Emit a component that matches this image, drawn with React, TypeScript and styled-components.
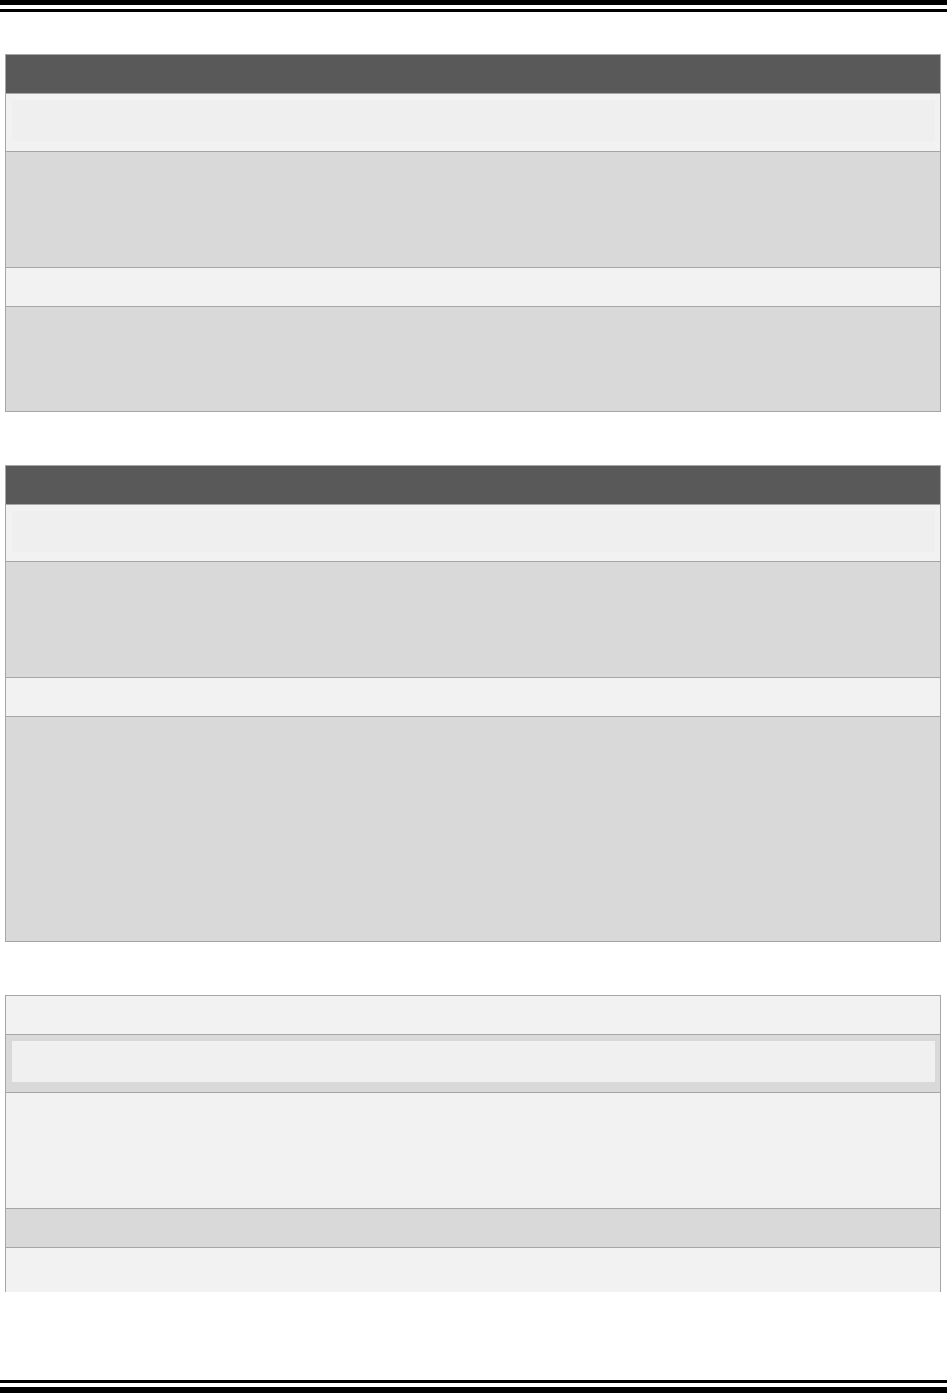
import React from "react";
import styled, { createGlobalStyle } from "styled-components";

const GlobalStyle = createGlobalStyle`
  html, body { margin: 0; padding: 0; background: #ffffff; }
  body { font-family: "Liberation Sans", Arial, sans-serif; }
`;

const Page = styled.div`
  width: 947px;
  height: 1393px;
  display: flex;
  flex-direction: column;
  background: #ffffff;
  overflow: hidden;
`;

const Rule = styled.div<{ $thick: number; $thin: number; $flip?: boolean }>`
  display: flex;
  flex-direction: ${(p) => (p.$flip ? "column-reverse" : "column")};
  flex: none;
  &::before {
    content: "";
    display: block;
    height: ${(p) => p.$thick}px;
    background: #000;
  }
  &::after {
    content: "";
    display: block;
    height: ${(p) => p.$thin}px;
    margin-top: ${(p) => (p.$flip ? 0 : 4)}px;
    margin-bottom: ${(p) => (p.$flip ? 4 : 0)}px;
    background: #000;
  }
`;

const Content = styled.main`
  flex: 1;
  display: flex;
  flex-direction: column;
  gap: 53px;
  padding: 42px 6px 0 5px;
`;

const Table = styled.section<{ $open?: boolean }>`
  display: flex;
  flex-direction: column;
  border: 1px solid #a6a6a6;
  border-bottom: ${(p) => (p.$open ? "none" : "1px solid #a6a6a6")};
`;

type Tone = "head" | "light" | "gray";

const bg: Record<Tone, string> = {
  head: "#595959",
  light: "#f2f2f2",
  gray: "#d9d9d9",
};

const Row = styled.div<{ $tone: Tone; $h: number }>`
  height: ${(p) => p.$h}px;
  background: ${(p) => bg[p.$tone]};
  padding: 6px 5px 10px 6px;
  box-sizing: border-box;
  & + & {
    border-top: 1px solid #a6a6a6;
  }
`;

const Box = styled.div<{ $tone: "faint" | "solid" }>`
  height: 41px;
  background: ${(p) => (p.$tone === "faint" ? "#efefef" : "#f0f0f0")};
`;

type RowSpec = { tone: Tone; h: number; box?: "faint" | "solid" };

const tables: { rows: RowSpec[]; open?: boolean }[] = [
  {
    rows: [
      { tone: "head", h: 38 },
      { tone: "light", h: 57, box: "faint" },
      { tone: "gray", h: 115 },
      { tone: "light", h: 38 },
      { tone: "gray", h: 104 },
    ],
  },
  {
    rows: [
      { tone: "head", h: 38 },
      { tone: "light", h: 56, box: "faint" },
      { tone: "gray", h: 115 },
      { tone: "light", h: 38 },
      { tone: "gray", h: 224 },
    ],
  },
  {
    open: true,
    rows: [
      { tone: "light", h: 38 },
      { tone: "gray", h: 57, box: "solid" },
      { tone: "light", h: 115 },
      { tone: "gray", h: 38 },
      { tone: "light", h: 44 },
    ],
  },
];

export default function App() {
  return (
    <>
      <GlobalStyle />
      <Page>
        <Rule $thick={5} $thin={3} />
        <Content>
          {tables.map((t, i) => (
            <Table key={i} $open={t.open}>
              {t.rows.map((r, j) => (
                <Row key={j} $tone={r.tone} $h={j === 0 ? r.h : r.h + 1}>
                  {r.box && <Box $tone={r.box} />}
                </Row>
              ))}
            </Table>
          ))}
        </Content>
        <Rule $thick={6} $thin={3} $flip />
      </Page>
    </>
  );
}
